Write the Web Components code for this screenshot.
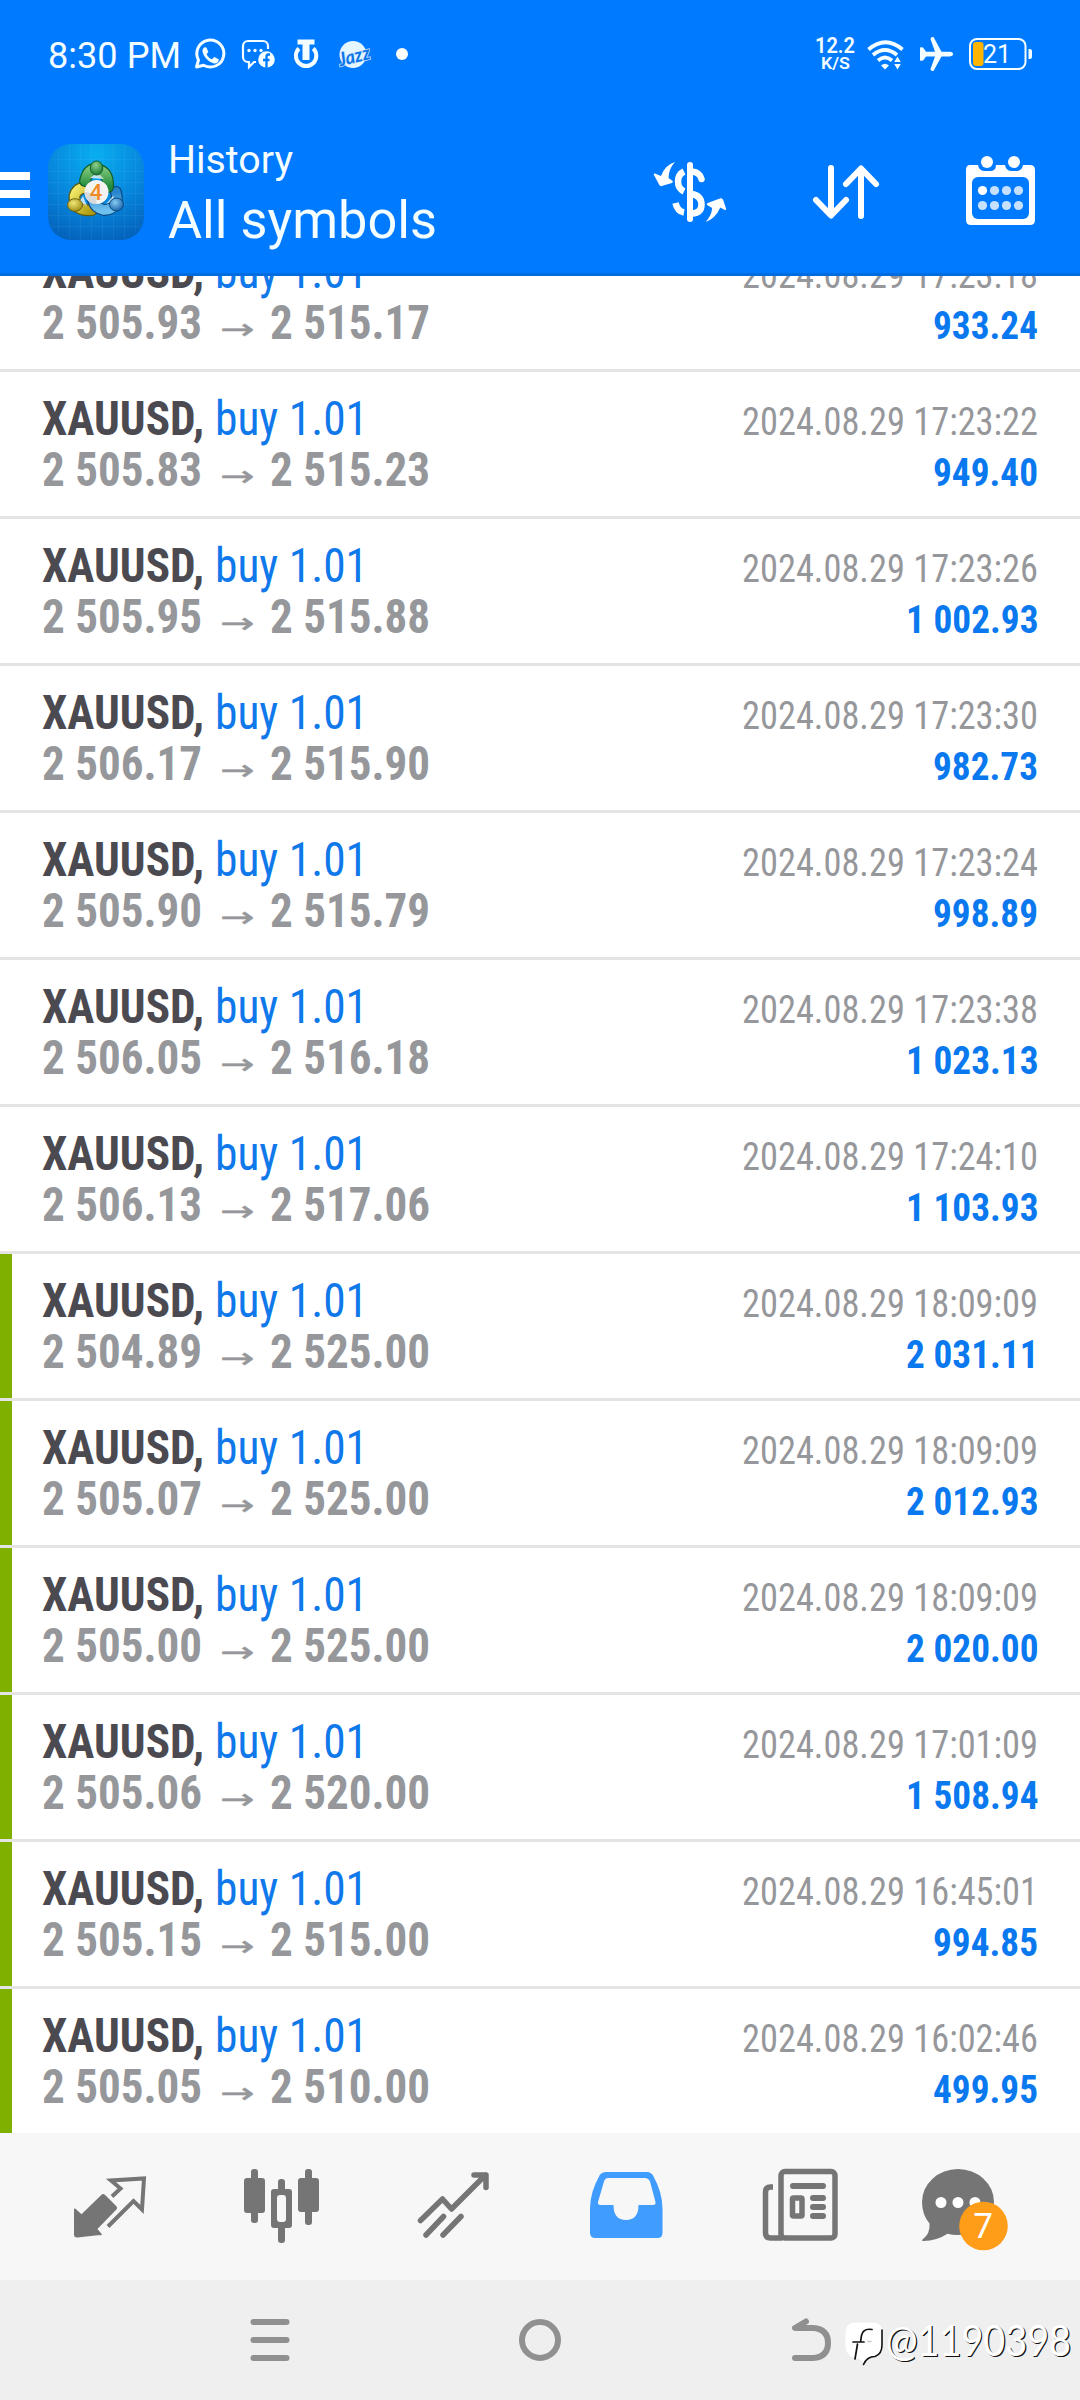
<!DOCTYPE html>
<html lang="en">
<head>
<meta charset="utf-8">
<title>History</title>
<style>
html,body{margin:0;padding:0}
body{width:1080px;height:2400px;overflow:hidden;background:#fff;font-family:"Roboto Condensed",Roboto,"Liberation Sans",sans-serif}
</style>
</head>
<body>
<trade-app></trade-app>
<script>
function define(name, html, setup) {
  const t = document.createElement('template');
  t.innerHTML = html;
  customElements.define(name, class extends HTMLElement {
    connectedCallback() {
      if (this.shadowRoot) return;
      const root = this.attachShadow({mode: 'open'});
      root.appendChild(t.content.cloneNode(true));
      if (setup) setup.call(this, root);
    }
  });
}

// Sets its text to an exact advance width given by the "w" attribute.
define('fit-text', `<style>
:host{display:inline-block;white-space:nowrap}
span{display:inline-block;transform-origin:0 50%;white-space:pre}
</style><span><slot></slot></span>`, function (root) {
  const s = root.querySelector('span');
  this.fit = () => {
    const w = +this.getAttribute('w');
    this.style.width = w + 'px';
    s.style.transform = 'none';
    const n = s.getBoundingClientRect().width;
    if (w && n) s.style.transform = 'scaleX(' + (w / n) + ')';
  };
  this.fit();
});

define('status-bar', `<style>
:host{display:flex;align-items:center;height:108px;box-sizing:border-box;padding-left:48px;color:#f4fdff;font-family:Roboto,sans-serif}
.time{font-size:36px;line-height:42px;padding-top:3px}
.gap{flex:1}
.net{display:flex;flex-direction:column;align-items:center;font-weight:600;width:42px;margin-right:7px}
.a{font-size:21.500px;line-height:19px}.b{font-size:17px;line-height:17px}
svg{display:block}
</style>
<fit-text class="time" w="133">8:30 PM</fit-text>
<svg width="230" height="50" viewBox="181 29 230 50" fill="none" stroke="#f4fdff">
 <path d="M196.500 67 L198.500 60 A13.500 13.500 0 1 1 203.600 65.200 Z" stroke-width="3" stroke-linejoin="round"/>
 <path d="M204.500 47.200c-1.800 1.200-2.500 3.200-1.700 5.600 1.900 5.200 5.600 8.900 10.600 10.500 2.600.7 5-.6 5.600-3.700l-4.600-2.600-2.600 2.300c-2.400-1.100-4.100-2.900-5.200-5.100l1.800-2.300-2-4.500z" fill="#f4fdff" stroke="none"/>
 <path d="M268 49v-3a5 5 0 0 0-5-5h-15a5 5 0 0 0-5 5v11a5 5 0 0 0 5 5h1v5l5-5h2" stroke-width="2.200"/>
 <g fill="#f4fdff" stroke="none"><circle cx="249" cy="50.500" r="1.700"/><circle cx="255" cy="50.500" r="1.700"/><circle cx="261" cy="50.500" r="1.700"/><circle cx="266.500" cy="59.500" r="8.300"/></g>
 <path d="M270 54.500h-1.500q-2 0-2 2.500v11M263 60h6.500" stroke="#007aff" stroke-width="2.300"/>
 <path d="M299 48.500a10.200 10.200 0 1 0 14.200 0" stroke-width="4"/>
 <path d="M297.500 39.500h17v5h-5v15.500h-7v-15.500h-5z" fill="#f4fdff" stroke="none"/>
 <circle cx="353" cy="54.500" r="13.500" fill="#e6f6ff" stroke="none"/>
 <text x="338" y="63" font-family="Lato, sans-serif" font-weight="700" font-style="italic" font-size="19" textLength="32" lengthAdjust="spacingAndGlyphs" fill="#0a74e8" stroke="#cfeaff" stroke-width="1.400" paint-order="stroke" transform="rotate(-14 353 56)">Jazz</text>
 <circle cx="402" cy="54" r="6" fill="#fff" stroke="none"/>
</svg>
<div class="gap"></div>
<div class="net"><fit-text class="a" w="40">12.2</fit-text><fit-text class="b" w="29">K/S</fit-text></div>
<svg width="217" height="50" viewBox="863 29 217 50" fill="none" stroke="#f4fdff">
 <g stroke-width="3.800"><path d="M868.500 49.500q17-14.500 34 0"/><path d="M873 55q12-10 24 0"/><path d="M878 60.500q7-6 14 0"/></g>
 <path d="M881 65.500q4-3.500 8 0l-4 4z" fill="#f4fdff" stroke="none"/>
 <path d="M897.500 56.500l3.300 5.500h-6.600zM897.500 69.500l-3.300-5.500h6.600z" fill="#f4fdff" stroke="none"/>
 <path d="M920 47.500q3-.8 4 1.200l2 3.100h9l-4.500-12.800q0-2.500 3-2l8 14.800h8.500q3 .2 3 2.300t-3 2.300h-8.500l-8 14.500q-3 .5-3-2l4.500-12.500h-9l-2 3q-1 2-4 1.200z" fill="#f4fdff" stroke="none"/>
 <rect x="970" y="39" width="55.500" height="30" rx="7" stroke-width="2"/>
 <rect x="973" y="42" width="10.500" height="24" rx="3" fill="#ffb400" stroke="none"/>
 <path d="M1028.500 49h1.500q2 0 2 2v6q0 2-2 2h-1.500z" fill="#f4fdff" stroke="none"/>
 <text x="983" y="63" font-family="Roboto,sans-serif" font-size="25" textLength="28" fill="#f4fdff" stroke="none">21</text>
</svg>`);

define('app-logo', `<style>:host{display:block;width:96px;height:96px}svg{display:block}</style>
<svg width="96" height="96" viewBox="0 0 96 96">
<defs>
<radialGradient id="bg" cx=".5" cy=".12" r=".95"><stop offset="0" stop-color="#08aef0"/><stop offset=".55" stop-color="#0785dc"/><stop offset="1" stop-color="#0460b8"/></radialGradient>
<linearGradient id="gr" x1="0" y1="0" x2="0" y2="1"><stop offset="0" stop-color="#7cc576"/><stop offset="1" stop-color="#1f8a3c"/></linearGradient>
<linearGradient id="ye" x1="0" y1="0" x2="1" y2="1"><stop offset="0" stop-color="#f2ea6a"/><stop offset="1" stop-color="#b09c12"/></linearGradient>
<linearGradient id="bl" x1="0" y1="0" x2="0" y2="1"><stop offset="0" stop-color="#2784cc"/><stop offset="1" stop-color="#6ec0ee"/></linearGradient>
<radialGradient id="g2" cx=".45" cy=".3" r=".7"><stop offset="0" stop-color="#8fd08a"/><stop offset="1" stop-color="#187a34"/></radialGradient>
<radialGradient id="y2" cx=".4" cy=".35" r=".7"><stop offset="0" stop-color="#f1e878"/><stop offset="1" stop-color="#9f8a10"/></radialGradient>
<radialGradient id="b2" cx=".4" cy=".35" r=".7"><stop offset="0" stop-color="#86ccf4"/><stop offset="1" stop-color="#145fa6"/></radialGradient>
</defs>
<rect width="96" height="96" rx="23" fill="url(#bg)"/>
<path d="M10.500 8v80M21.500 1v94M32.500 0v96M43.500 0v96M54.500 0v96M65.500 0v96M76.500 1v94M87.500 8v80M4 15.500h88M1 27.500h94M0 38.500h96M0 49.500h96M0 60.500h96M0 71.500h96M3 82.500h90" stroke="#7fd4ff" stroke-opacity=".09" fill="none"/>
<g fill="none" stroke-width="12" stroke-linecap="round">
 <path d="M44 66Q26 68 26.500 52Q29 43 38 44" stroke="#5c5a10"/><path d="M44 66Q26 68 26.500 52Q29 43 38 44" stroke="url(#ye)" stroke-width="9.500"/>
 <path d="M68 48Q72 65 56 66Q47 64 45 56" stroke="#0b4a82"/><path d="M68 48Q72 65 56 66Q47 64 45 56" stroke="url(#bl)" stroke-width="9.500"/>
 <path d="M37 37Q40 24 49 25Q61 28 60 43" stroke="#12602c"/><path d="M37 37Q40 24 49 25Q61 28 60 43" stroke="url(#gr)" stroke-width="9.500"/>
</g>
<path d="M42 34l7-6 7 7zM31 58l4-6 4 10zM58 60l7-8 2 4z" fill="#fff" opacity=".75"/>
<ellipse cx="48.500" cy="24" rx="6.300" ry="7" fill="url(#g2)" stroke="#12602c"/>
<ellipse cx="27" cy="61" rx="7.500" ry="6.300" fill="url(#y2)" stroke="#6b6410"/>
<ellipse cx="68.500" cy="60.500" rx="7" ry="6.500" fill="url(#b2)" stroke="#0b4a82"/>
<circle cx="48.500" cy="48" r="12" fill="#f3f3f2"/><path d="M36.500 48a12 12 0 0 0 12 12v-10z" fill="#d9d9d9"/>
<text x="48" y="55.500" text-anchor="middle" font-family="Roboto,sans-serif" font-weight="500" font-size="22" fill="#f08a24">4</text>
</svg>`);

define('app-header', `<style>
:host{display:block;height:273px;background:#007aff;border-bottom:3px solid #006cdf;position:relative;z-index:1}
.bar{display:flex;align-items:flex-start;height:165px;box-sizing:border-box;padding-top:28px;color:#f4fdff;font-family:Roboto,sans-serif}
svg{display:block;margin-top:8px}app-logo{margin-top:8px}
.t{display:flex;flex-direction:column;margin-left:24px}
.h{font-size:39px;line-height:46px;margin-top:1px}.s{font-size:51px;line-height:60px;margin-top:8px}
.gap{flex:1}
</style>
<status-bar></status-bar>
<div class="bar">
 <svg width="48" height="96" viewBox="0 144 48 96"><path d="M0 172h30v8H0zM0 190h30v8H0zM0 208h30v8H0z" fill="#fff"/></svg>
 <app-logo></app-logo>
 <div class="t"><fit-text class="h" w="125">History</fit-text><fit-text class="s" w="269">All symbols</fit-text></div>
 <div class="gap"></div>
 <svg width="440" height="96" viewBox="640 144 440 96" fill="none" stroke="#fff">
  <g stroke-width="6.500">
   <path d="M684 171.500q-6 3-6 10t6 10"/><path d="M675.500 203q2 8.500 8.500 9.500"/>
   <path d="M692 171.500q8 1 9.500 7.500" stroke-linecap="round"/><path d="M692 194q9.500 2 9.500 10.500t-9.500 9"/>
   <path d="M690 165v54" stroke-width="6" stroke-linecap="round"/>
  </g>
  <g fill="#fff" stroke="none"><path d="M675 162q-10 3-14 14l-6-2.500q-1.500-.3-1.200 1.300l5.700 10.500q.8 1 2.200.8l10.300-3q1.500-.8.600-2l-4-3q0-9 6.400-16.100z"/>
  <path d="M705.500 222q10-3.500 14.800-14.500l4.500 2.500q1.500.3 1.300-1.300l-3-9q-.6-1.700-2.500-1.500l-13 4.700q-1.500.8-.5 2l5 3q-.2 7-6.600 14.100z"/></g>
  <path d="M831 168v47M816 200l15 15.500 15-15.500M861 216v-47M846 184l15-15.500 15 15.500" stroke-width="6" stroke-linecap="round" stroke-linejoin="round"/>
  <path d="M971 165h7q1 6 7 6h5q6 0 6-6h9q1 6 7 6h4q6 0 7-6h7q5 0 5 5v50q0 5-5 5h-59q-5 0-5-5v-50q0-5 4-5z" fill="#fff" stroke="none"/>
  <circle cx="987" cy="162" r="6" fill="#fff" stroke="none"/><circle cx="1014" cy="162" r="6" fill="#fff" stroke="none"/>
  <rect x="972" y="177" width="57" height="42" rx="6" fill="#007aff" stroke="none"/>
  <g stroke="none" fill="#c6e1ff"><circle cx="982.500" cy="190.500" r="4.600" fill="#fff"/><circle cx="994.500" cy="190.500" r="4.600"/><circle cx="1006.500" cy="190.500" r="4.600"/><circle cx="1018.500" cy="190.500" r="4.600"/><circle cx="982.500" cy="205.500" r="4.600"/><circle cx="994.500" cy="205.500" r="4.600"/><circle cx="1006.500" cy="205.500" r="4.600"/><circle cx="1018.500" cy="205.500" r="4.600"/></g>
 </svg>
</div>`);

define('trade-row', `<style>
:host{display:block;height:147px;box-sizing:border-box;border-bottom:3px solid #e4e4e4;background:#fff;padding:21px 42px 0;font-stretch:75%}
:host([tp]){background:linear-gradient(90deg,#7fb000 12px,#fff 12px)}
.l{display:flex;align-items:baseline;height:51px;line-height:51px;font-size:48px}
.sym{color:#4c4a51;font-weight:700}.buy{color:#0f78ea;margin-left:10.500px}
.p{color:#96979b;font-weight:700}
.ar{color:#96979b;font-family:"DejaVu Sans",sans-serif;font-stretch:normal;font-size:29px;-webkit-text-stroke:.4px #96979b;padding-bottom:1px;margin:0 15.500px 0 18px}
.r{margin-left:auto;font-size:39px}.d{color:#96979b}.v{color:#0a78ee;font-weight:700}
</style>
<div class="l"><fit-text class="sym" w="162">XAUUSD,</fit-text><fit-text class="buy" w="153">buy 1.01</fit-text><fit-text class="r d" w="296"></fit-text></div>
<div class="l"><fit-text class="p o" w="160"></fit-text><fit-text class="ar" w="34.5">→</fit-text><fit-text class="p c" w="160"></fit-text><fit-text class="r v"></fit-text></div>`,
function (root) {
  const [o, c, d, v] = this.dataset.row.split('|');
  root.querySelector('.v').setAttribute('w', v.length > 6 ? 132.5 : 105);
  const put = (q, t) => { const e = root.querySelector(q); e.textContent = t; e.fit(); };
  put('.o', o); put('.c', c); put('.d', d); put('.v', v);
});

define('trade-list', `<style>:host{display:block;height:1857px;overflow:hidden}div{display:flex;flex-direction:column;margin-top:-51px}</style><div></div>`, function (root) {
  const rows = [
    '2 505.93|2 515.17|2024.08.29 17:23:18|933.24',
    '2 505.83|2 515.23|2024.08.29 17:23:22|949.40',
    '2 505.95|2 515.88|2024.08.29 17:23:26|1 002.93',
    '2 506.17|2 515.90|2024.08.29 17:23:30|982.73',
    '2 505.90|2 515.79|2024.08.29 17:23:24|998.89',
    '2 506.05|2 516.18|2024.08.29 17:23:38|1 023.13',
    '2 506.13|2 517.06|2024.08.29 17:24:10|1 103.93',
    '2 504.89|2 525.00|2024.08.29 18:09:09|2 031.11',
    '2 505.07|2 525.00|2024.08.29 18:09:09|2 012.93',
    '2 505.00|2 525.00|2024.08.29 18:09:09|2 020.00',
    '2 505.06|2 520.00|2024.08.29 17:01:09|1 508.94',
    '2 505.15|2 515.00|2024.08.29 16:45:01|994.85',
    '2 505.05|2 510.00|2024.08.29 16:02:46|499.95'];
  const box = root.querySelector('div');
  rows.forEach((r, i) => {
    const e = document.createElement('trade-row');
    e.dataset.row = r;
    if (i > 6) e.setAttribute('tp', '');
    box.appendChild(e);
  });
});

define('tab-bar', `<style>
:host{display:flex;height:147px;background:#f7f7f7;padding-left:24px}
svg{display:block;flex:none}
</style>
<svg width="172" height="147" viewBox="24 2133 172 147" fill="#757575">
 <path d="M74 2212q.5-1 1.500-.3l6 5.500 20-19.500q1.700-1.500 3.400 0l11.500 11.500q1.500 1.700 0 3.400l-19 19.500 4.300 4.800q.4 1-.6 1.300l-23.500 -1q-3.600.3-3.600-3z" transform="translate(0 -3)"/>
 <path d="M74 2222l8-6 18 18-2.500 1.200-20 2.300q-3.500.2-3.500-3z"/>
 <path d="M112 2196.500l8.500-8-9.500-8 33-2-2 31-8.500-8.500-25.500 25.500" fill="none" stroke="#757575" stroke-width="4"/>
</svg>
<svg width="172" height="147" viewBox="196 2133 172 147" fill="#757575">
 <rect x="244" y="2178" width="21" height="35" rx="3"/><rect x="251" y="2169" width="7" height="54" rx="3"/>
 <rect x="298" y="2178" width="21" height="34" rx="3"/><rect x="305" y="2169" width="7" height="56" rx="3"/>
 <rect x="271" y="2189" width="21" height="39" rx="3"/><rect x="278" y="2179" width="7" height="64" rx="3"/>
 <rect x="277" y="2195" width="9" height="27" rx="3" fill="#f7f7f7"/>
</svg>
<svg width="172" height="147" viewBox="368 2133 172 147" fill="none" stroke="#757575" stroke-width="5.500" stroke-linecap="round" stroke-linejoin="round">
 <path d="M420.500 2220.500l22-21.500 9 10 34-34M474 2175h12v12.500"/>
 <path d="M426 2235l17.500-18.500M443 2235l18-18.500"/>
</svg>
<svg width="172" height="147" viewBox="540 2133 172 147">
 <path d="M606 2172h41q4 0 6 3.500 9.500 17 9.500 33v24q0 5.500-5 5.500h-62q-5.500 0-5.500-5.500v-24q0-16 9.500-33 2-3.500 6.500-3.500z" fill="#419cff"/>
 <path d="M608 2178h37q3.500 0 5 3.500l5.500 20.500q.5 3-2.500 3h-14.500q0 15-12.500 15t-12.500-15h-13q-3 0-2.500-3l6-20.500q1-3.500 4-3.500z" fill="#f7f7f7"/>
</svg>
<svg width="172" height="147" viewBox="712 2133 172 147" fill="none" stroke="#757575" stroke-width="5.500">
 <rect x="781" y="2171.500" width="54" height="66.500" rx="4"/>
 <path d="M773 2187h-2.500q-5 0-5 5v41q0 5 5 5h12"/>
 <path d="M793 2186h30M813 2198h10M813 2207h10M813 2216h10" stroke-width="6" stroke-linecap="round"/>
 <rect x="792.500" y="2198" width="9.500" height="18" rx="1"/>
</svg>
<svg width="172" height="147" viewBox="884 2133 172 147">
 <path d="M922 2202a36 33 0 1 1 36 33q-6 0-10.500-1.200-11 7.200-24 7.200-2 0-1-1.500 8-6 7-16-7.500-9-7.500-21.500z" fill="#757575"/>
 <g fill="#fff"><circle cx="941" cy="2202.500" r="5.500"/><circle cx="958" cy="2202.500" r="5.500"/><circle cx="975" cy="2202.500" r="5.500"/></g>
 <circle cx="983.500" cy="2226" r="24.300" fill="#ff9d19"/>
 <text x="983" y="2238" text-anchor="middle" font-family="Roboto,sans-serif" font-size="35" fill="#fff">7</text>
</svg>`);

define('nav-bar', `<style>
:host{display:flex;align-items:center;height:120px;background:#efefef}
svg{display:block;flex:none}
.w{font-family:Lato,sans-serif;font-size:43px;line-height:52px;color:#fff;text-shadow:1.300px 1.200px 0.300px #111}
</style>
<svg width="886" height="120" viewBox="0 2280 886 120" fill="none" stroke="#909090" stroke-width="6" stroke-linecap="round">
 <path d="M253.500 2322h33M253.500 2340h33M253.500 2358h33"/>
 <circle cx="540" cy="2340" r="18"/>
 <path d="M806 2321.500l-11 6.500h18q15 1 15 15t-15 15h-18" stroke-linejoin="round"/>
 <path d="M856 2322.500h16q10.500 0 10.500 11v11q0 11-10.500 13.500-6 1.500-8 7-2-6-8-7-10.500-1.500-10.500-13.500v-11q0-11 10.500-11z" fill="#fff" stroke="none"/>
 <path d="M882 2330v15q0 9-7 11.500-8 0-11.500 8" stroke="#111" stroke-width="1.600"/>
 <path d="M872 2329.500q-9-1.500-10.500 6l-.8 5.500M853 2342h11M857.500 2344l-2.500 15" stroke="#111" stroke-width="1.700"/>
 <path d="M868 2341.500h3" stroke="#ccc" stroke-width="1.500"/>
</svg>
<fit-text class="w" w="185">@1190398</fit-text>`);

define('trade-app', `<style>:host{display:flex;flex-direction:column;width:1080px;height:2400px;background:#fff}</style>
<app-header></app-header><trade-list></trade-list><tab-bar></tab-bar><nav-bar></nav-bar>`);
</script>
</body>
</html>
